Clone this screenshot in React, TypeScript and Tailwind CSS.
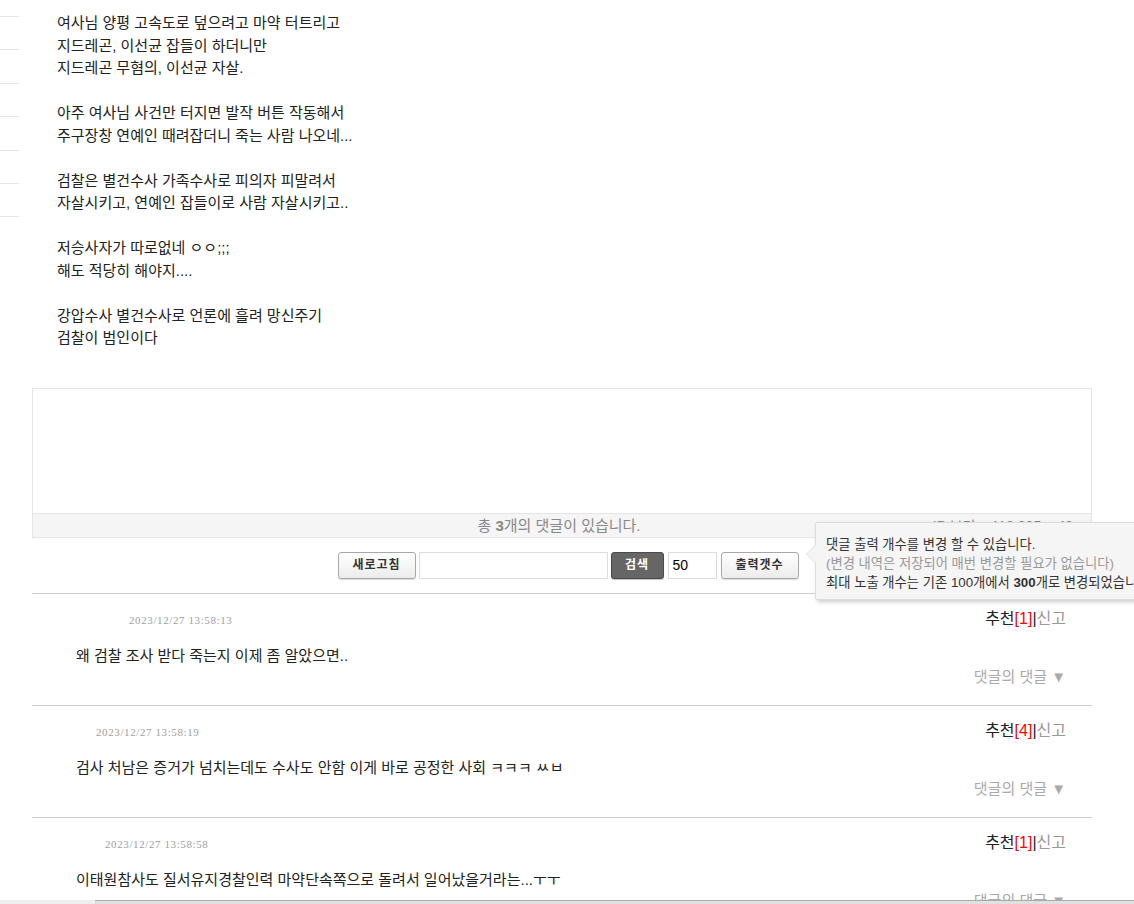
import * as React from "react";

const postLines = [
  "여사님 양평 고속도로 덮으려고 마약 터트리고",
  "지드레곤, 이선균 잡들이 하더니만",
  "지드레곤 무혐의, 이선균 자살.",
  "",
  "아주 여사님 사건만 터지면 발작 버튼 작동해서",
  "주구장창 연예인 때려잡더니 죽는 사람 나오네...",
  "",
  "검찰은 별건수사 가족수사로 피의자 피말려서",
  "자살시키고, 연예인 잡들이로 사람 자살시키고..",
  "",
  "저승사자가 따로없네 ㅇㅇ;;;",
  "해도 적당히 해야지....",
  "",
  "강압수사 별건수사로 언론에 흘려 망신주기",
  "검찰이 범인이다",
];

const comments = [
  { date: "2023/12/27 13:58:13", indent: "ml-[97px]", rec: 1, text: "왜 검찰 조사 받다 죽는지 이제 좀 알았으면.." },
  { date: "2023/12/27 13:58:19", indent: "ml-[64px]", rec: 4, text: "검사 처남은 증거가 넘치는데도 수사도 안함 이게 바로 공정한 사회 ㅋㅋㅋ ㅆㅂ" },
  { date: "2023/12/27 13:58:58", indent: "ml-[73px]", rec: 1, text: "이태원참사도 질서유지경찰인력 마약단속쪽으로 돌려서 일어났을거라는...ㅜㅜ" },
];

const btn =
  "h-[27px] rounded-[3px] border border-[#a8a8a8] bg-gradient-to-b from-white to-[#ececec] text-[12px] font-bold tracking-[1px] text-[#333] shadow-[0_1px_1px_rgba(0,0,0,0.15)]";

function CommentRow({ c }: { c: (typeof comments)[number] }) {
  return (
    <div className="border-b border-[#cccccc] pb-[18px] pr-[26px] pt-[15px]">
      <div className="flex h-[20px] items-center justify-between">
        <span
          className={`${c.indent} mt-[4px] font-['Liberation_Serif',serif] text-[11px] tracking-[0.6px] text-[#a0a0a0]`}
        >
          {c.date}
        </span>
        <span className="text-[16px] leading-[20px]">
          <span className="text-[#222]">추천</span>
          <span className="text-[#ff0000]">[{c.rec}]</span>
          <span className="text-[#222]">|</span>
          <span className="text-[#999]">신고</span>
        </span>
      </div>
      <div className="mt-[17px] pl-[44px] text-[15px] leading-[20px] text-[#222]">{c.text}</div>
      <div className="mt-[1px] text-right text-[15px] leading-[20px] text-[#aaa]">댓글의 댓글 ▼</div>
    </div>
  );
}

export default function App() {
  return (
    <div className="relative h-[904px] w-full overflow-hidden bg-white font-['Liberation_Sans','Noto_Sans_CJK_KR',sans-serif]">
      <div className="flex">
        {/* cut-off side list */}
        <div className="mt-[16px] flex w-[19px] shrink-0 flex-col">
          {Array.from({ length: 7 }).map((_, i) => (
            <div key={i} className="h-[33.4px] border-t border-[#e6e6e6]" />
          ))}
        </div>

        <div className="w-[1073px] shrink-0 pl-[13px]">
          <div className="pl-[25px] pt-[12px] text-[15px] leading-[22.5px] text-[#222]">
            {postLines.map((l, i) => (
              <div key={i} className="h-[22.5px]">
                {l}
              </div>
            ))}
          </div>

          <div className="mt-[38px] border border-[#e5e5e5]">
            <div className="h-[124px] bg-white" />
            <div className="relative h-[24px] border-t border-[#e5e5e5] bg-[#f5f5f5] pr-[6px] text-center text-[15px] leading-[24px] text-[#888]">
              총 <b>3</b>개의 댓글이 있습니다.
              <span className="absolute right-[18px] top-0 text-[14px] text-[#888]">IP 보기 ○ 118.235 ○ 49</span>
            </div>
          </div>

          <div className="mt-[14px] flex items-center justify-center pl-[12px]">
            <button className={`${btn} w-[78px]`}>새로고침</button>
            <input className="ml-[3px] h-[27px] w-[189px] border border-[#dddddd] bg-white" />
            <button className="ml-[3px] h-[27px] w-[53px] rounded-[3px] border border-[#4a4a4a] bg-[#666666] text-[12px] font-bold tracking-[1px] text-white shadow-[0_1px_1px_rgba(0,0,0,0.25)]">
              검색
            </button>
            <input
              defaultValue="50"
              className="ml-[4px] h-[27px] w-[49px] border border-[#dddddd] bg-white pl-[4px] text-[14px] text-black"
            />
            <button className={`${btn} ml-[4px] w-[78px]`}>출력갯수</button>
          </div>

          <div className="mt-[14px] border-t border-[#cccccc]">
            {comments.map((c, i) => (
              <CommentRow key={i} c={c} />
            ))}
          </div>
        </div>
      </div>

      {/* tooltip */}
      <div className="absolute left-[815px] top-[522px] whitespace-nowrap rounded-[2px] border border-[#dddddd] bg-[#f5f5f5] pb-[7px] pl-[10px] pr-[20px] pt-[12px] text-[13.3px] leading-[19px] shadow-[2px_2px_4px_rgba(0,0,0,0.2)]">
        <span className="absolute left-[-10px] top-[21px] h-0 w-0 border-y-[10px] border-r-[10px] border-y-transparent border-r-[#dddddd]" />
        <span className="absolute left-[-9px] top-[21px] h-0 w-0 border-y-[10px] border-r-[10px] border-y-transparent border-r-[#f5f5f5]" />
        <div className="text-[#333]">댓글 출력 개수를 변경 할 수 있습니다.</div>
        <div className="text-[#999]">(변경 내역은 저장되어 매번 변경할 필요가 없습니다)</div>
        <div className="text-[#333]">
          최대 노출 개수는 기존 100개에서 <b>300</b>개로 변경되었습니다.
        </div>
      </div>

      {/* bottom scroll strip */}
      <div className="absolute bottom-0 left-0 right-0 h-[4px] bg-[#eeeeee]">
        <div className="ml-[95px] h-full border-t border-[#aaaaaa] bg-[#e0e0e0]" />
      </div>
    </div>
  );
}
